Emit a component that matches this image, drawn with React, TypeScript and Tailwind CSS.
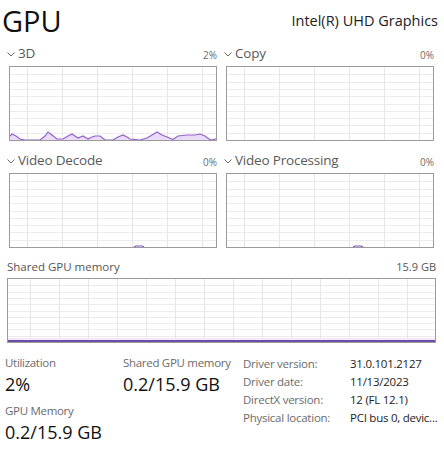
import React from 'react';

// GPU performance page (Task Manager style)

type Pt = [number, number];

const load3d: Pt[] = [
  [0, 4], [2, 6], [6, 4], [10, 1], [15, 0], [30, 0], [35, 4], [38, 8], [42, 5], [47, 1], [53, 1],
  [58, 4], [62, 6], [68, 2], [73, 4], [78, 1], [82, 3], [85, 4], [90, 4], [95, 0], [103, 0],
  [108, 3], [113, 5], [117, 3], [120, 1], [130, 0], [137, 2], [142, 5], [147, 8], [152, 5],
  [157, 3], [163, 0.5], [168, 4], [177, 5], [185, 5], [190, 6], [195, 4], [199, 1], [202, 0],
  [205, 1], [207, 1],
];

const Chart = ({
  w,
  h,
  step,
  offset,
  data,
  blips,
}: {
  w: number;
  h: number;
  step: number;
  offset: number;
  data?: Pt[];
  blips?: number[];
}) => {
  const vx: number[] = [];
  for (let x = offset; x < w; x += step) vx.push(x);
  const hy: number[] = [];
  for (let i = 1; i < 10; i++) hy.push(Math.round((h * i) / 10) + 0.5);

  let line = '';
  let area = '';
  if (data) {
    line = data.map(([x, v], i) => `${i ? 'L' : 'M'}${x},${h - v}`).join(' ');
    area = `M0,${h} ` + data.map(([x, v]) => `L${x},${h - v}`).join(' ') + ` L${w},${h} Z`;
  }

  return (
    <svg width={w} height={h} viewBox={`0 0 ${w} ${h}`} className="block">
      {hy.map((y) => (
        <line key={'h' + y} x1={0} x2={w} y1={y} y2={y} stroke="#ececec" strokeWidth={1} />
      ))}
      {vx.map((x) => (
        <line key={'v' + x} x1={x + 0.5} x2={x + 0.5} y1={0} y2={h} stroke="#e6e6e6" strokeWidth={1} />
      ))}
      {data && (
        <>
          <path d={area} fill="#eadcf8" />
          <path d={line} fill="none" stroke="#9461cc" strokeWidth={1.2} />
        </>
      )}
      {blips &&
        blips.map((x) => (
          <path key={'b' + x} d={`M${x},${h} L${x + 2},${h - 1} L${x + 8},${h - 1} L${x + 10},${h}`} fill="none" stroke="#7a52b8" strokeWidth={1.2} />
        ))}
    </svg>
  );
};

const Panel = ({ title, pct, data, blips }: { title: string; pct: string; data?: Pt[]; blips?: number[] }) => (
  <div className="flex flex-col">
    <div className="flex items-end justify-between h-[26px] pb-[6px] -ml-[3px]">
      <div className="flex items-center gap-[2px] text-[13.5px] leading-none text-[#5a5a5a] tracking-[-0.2px]">
        <svg width="10" height="10" viewBox="0 0 10 10" className="mt-[1px]">
          <path d="M1.5 3.5 L5 7 L8.5 3.5" fill="none" stroke="#666" strokeWidth="1" />
        </svg>
        <span>{title}</span>
      </div>
      <span className="text-[10px] leading-none text-[#6b6b6b]">{pct}</span>
    </div>
    <div className="border border-[#9b9b9b] h-[75px] overflow-hidden">
      <Chart w={207} h={73} step={35} offset={17} data={data} blips={blips} />
    </div>
  </div>
);

const Stat = ({ label, value }: { label: string; value: string }) => (
  <div className="flex flex-col">
    <span className="text-[11.5px] leading-[16px] text-[#6b6b6b] whitespace-nowrap tracking-[-0.3px]">{label}</span>
    <span className="text-[18px] leading-[26px] text-[#111] whitespace-nowrap">{value}</span>
  </div>
);

const info: [string, string][] = [
  ['Driver version:', '31.0.101.2127'],
  ['Driver date:', '11/13/2023'],
  ['DirectX version:', '12 (FL 12.1)'],
  ['Physical location:', 'PCI bus 0, devic...'],
];

export default function App() {
  return (
    <div
      className="w-[444px] h-[450px] bg-white overflow-hidden"
      style={{ fontFamily: '"Open Sans", "Noto Sans", sans-serif' }}
    >
      <div className="flex items-end justify-between h-[40px] pl-[2px] pr-[6px]">
        <span className="text-[29px] leading-[38px] text-[#111]">GPU</span>
        <span className="text-[14.5px] leading-[20px] text-[#222] pb-[9px]">Intel(R) UHD Graphics</span>
      </div>

      <div className="grid grid-cols-2 gap-x-[9px] pl-[9px] pr-[10px]">
        <Panel title="3D" pct="2%" data={load3d} />
        <Panel title="Copy" pct="0%" />
      </div>
      <div className="grid grid-cols-2 gap-x-[9px] pl-[9px] pr-[10px] mt-[6px]">
        <Panel title="Video Decode" pct="0%" blips={[124]} />
        <Panel title="Video Processing" pct="0%" blips={[126]} />
      </div>

      <div className="flex flex-col pl-[7px] pr-[8px]">
        <div className="flex items-end justify-between h-[30px] pb-[6px]">
          <span className="text-[11.5px] leading-none text-[#555]">Shared GPU memory</span>
          <span className="text-[11px] leading-none text-[#555]">15.9 GB</span>
        </div>
        <div className="relative border border-[#9b9b9b] h-[65px] overflow-hidden">
          <Chart w={427} h={63} step={29} offset={22} />
          <div className="absolute left-0 right-0 bottom-0 h-[2px] bg-[#6c4ea8]" />
          <div className="absolute left-0 right-0 bottom-[2px] h-[2px] bg-[#f3e8fb]" />
        </div>
      </div>

      <div className="flex pl-[5px] pt-[12px]">
        <div className="flex flex-col gap-[6px] w-[118px]">
          <Stat label="Utilization" value="2%" />
          <Stat label="GPU Memory" value="0.2/15.9 GB" />
        </div>
        <div className="w-[120px]">
          <Stat label="Shared GPU memory" value="0.2/15.9 GB" />
        </div>
        <div className="flex flex-col text-[11.5px] leading-[18px] whitespace-nowrap tracking-[-0.25px]">
          {info.map(([k, v]) => (
            <div key={k} className="flex">
              <span className="w-[107px] text-[#6b6b6b]">{k}</span>
              <span className="text-[#222]">{v}</span>
            </div>
          ))}
        </div>
      </div>
    </div>
  );
}
